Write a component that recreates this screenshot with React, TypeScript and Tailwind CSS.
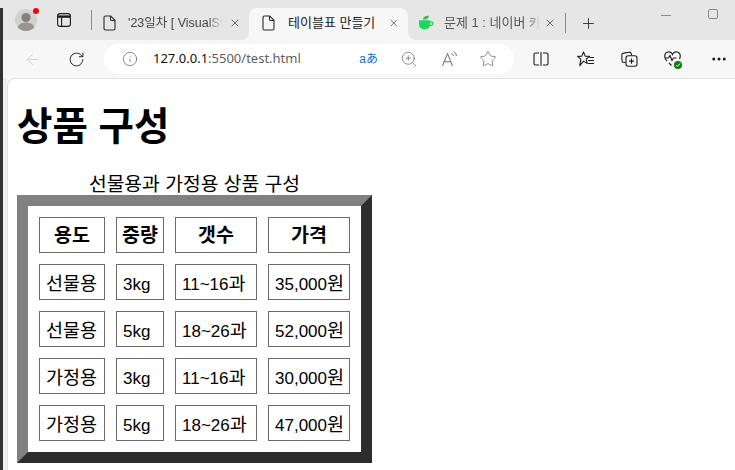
// Edge browser window showing a small HTML table test page
import { ArrowLeft, Ellipsis, Info, Plus, RotateCw, Star, X, ZoomIn } from "lucide-react";

// each cell: latin part, hangul part (hangul renders a bit larger than latin in the shot)
const rows = [
  [["", "선물용"], ["3kg", ""], ["11~16", "과"], ["35,000", "원"]],
  [["", "선물용"], ["5kg", ""], ["18~26", "과"], ["52,000", "원"]],
  [["", "가정용"], ["3kg", ""], ["11~16", "과"], ["30,000", "원"]],
  [["", "가정용"], ["5kg", ""], ["18~26", "과"], ["47,000", "원"]],
];

const headers = ["용도", "중량", "갯수", "가격"];
const cellWidths = ["w-[66px]", "w-[48px]", "w-[82px]", "w-[82px]"];

function DocIcon() {
  return (
    <svg width="14" height="16" viewBox="0 0 14 16" fill="none" stroke="#2b2b2b" strokeWidth="1.1" className="shrink-0">
      <path d="M2.5 1h5.2L12 5.3V13.5a1.5 1.5 0 0 1-1.5 1.5h-8A1.5 1.5 0 0 1 1 13.5v-11A1.5 1.5 0 0 1 2.5 1Z" />
      <path d="M7.5 1v3.2A1.3 1.3 0 0 0 8.8 5.5H12" />
    </svg>
  );
}

function Avatar() {
  return (
    <div className="relative h-[22px] w-[22px] shrink-0">
      <svg width="22" height="22" viewBox="0 0 22 22">
        <circle cx="11" cy="11" r="11" fill="#d3d1ce" />
        <circle cx="11" cy="8.5" r="4.6" fill="#86817c" />
        <path d="M2.8 18.5C4 14.6 7 13.6 11 13.6s7 1 8.2 4.9A11 11 0 0 1 11 22a11 11 0 0 1-8.2-3.5Z" fill="#9a9590" />
      </svg>
      <span className="absolute right-[-2px] top-[-1px] h-[6px] w-[6px] rounded-full bg-[#f00016]" />
    </div>
  );
}

function VerticalTabsIcon() {
  return (
    <svg width="14" height="14" viewBox="0 0 14 14" fill="none" stroke="#1c1c1c" strokeWidth="1.1" className="shrink-0">
      <rect x="0.6" y="0.6" width="12.8" height="12.8" rx="2.5" />
      <path d="M1 3.6h12" strokeWidth="2.4" />
      <path d="M4.6 4v9" />
    </svg>
  );
}

function CupIcon() {
  return (
    <svg width="16" height="16" viewBox="0 0 16 16" className="shrink-0">
      <path d="M5 4.5C5 1.8 8 .7 11 .8 10.8 3.4 8.4 5 5 4.5Z" fill="#39b54a" />
      <path d="M1 5.2h11.2v4.3a5 5 0 0 1-5 5H6a5 5 0 0 1-5-5Z" fill="#1ed760" />
      <path d="M12 6.8h1.2a1.7 1.7 0 0 1 0 3.6H12" fill="none" stroke="#1ed760" strokeWidth="1.3" />
    </svg>
  );
}

function ReadAloudIcon() {
  return (
    <svg width="18" height="18" viewBox="0 0 18 18" fill="none" stroke="#6b6b6b" strokeWidth="1">
      <path d="M1.5 16 6.5 3.5 11.5 16M3.3 11.8h6.4" />
      <path d="M10.5 3.2c1 .6 1.6 1.6 1.8 2.8M12.6 1.4c1.6 1 2.6 2.6 2.8 4.6" />
    </svg>
  );
}

function SplitIcon() {
  return (
    <svg width="16" height="14" viewBox="0 0 16 14" fill="none" stroke="#1c1c1c" strokeWidth="1.1">
      <path d="M6 1H2.5A1.5 1.5 0 0 0 1 2.5v9A1.5 1.5 0 0 0 2.5 13H6" />
      <path d="M10 1h3.5A1.5 1.5 0 0 1 15 2.5v9a1.5 1.5 0 0 1-1.5 1.5H10" />
      <path d="M8 0v14" />
    </svg>
  );
}

function FavoritesIcon() {
  return (
    <svg width="18" height="16" viewBox="0 0 18 16" fill="none" stroke="#1c1c1c" strokeWidth="1.1">
      <path d="M6.5 1 8.2 5.1l4.3.3-3.3 2.8 1 4.2-3.7-2.3-3.7 4.6 1-6.5L.6 5.4l4.2-.3Z" strokeLinejoin="round" />
      <path d="M12.5 6.5H17M11 9.5h6M11 12.5h6" />
    </svg>
  );
}

function CollectionsIcon() {
  return (
    <svg width="17" height="16" viewBox="0 0 17 16" fill="none" stroke="#1c1c1c" strokeWidth="1.1">
      <path d="M4.5 11.5H3A2 2 0 0 1 1 9.7L.8 4.2A2 2 0 0 1 2.6 2.1L8 1.2a2 2 0 0 1 2.2 1.4l.5 1.7" />
      <rect x="5" y="4.8" width="11" height="10.5" rx="2.2" />
      <path d="M10.5 7.5v5.2M8 10.1h5" />
    </svg>
  );
}

function HealthIcon() {
  return (
    <div className="relative h-[16px] w-[17px]">
      <svg width="17" height="16" viewBox="0 0 17 16" fill="none" stroke="#1c1c1c" strokeWidth="1.1">
        <path d="M3 10C1.5 8.5.8 7 .8 5.4A4 4 0 0 1 8.5 3.5 4 4 0 0 1 16.2 5.4C16.2 6.5 16 7 15.5 8" />
        <path d="M.8 7h3.7l1.5-2.5L8 9.5l1.500-2.500h3" />
        <path d="M5 12l2.500 2.500" />
      </svg>
      <span className="absolute bottom-[-2px] right-[-1px] flex h-[8px] w-[8px] items-center justify-center rounded-full bg-[#107c10]">
        <svg width="6" height="6" viewBox="0 0 6 6" fill="none" stroke="#fff" strokeWidth="1">
          <path d="M1 3l1.500 1.500L5 1.500" />
        </svg>
      </span>
    </div>
  );
}

export default function App() {
  return (
    <div className="flex h-[470px] w-[735px] overflow-hidden bg-[#f7f7f7] font-['Liberation_Sans','Noto_Sans_CJK_KR',sans-serif] text-black">
      {/* Dark window edge on the left */}
      <div className="w-[3px] shrink-0 bg-[#e6e6e6] pt-[8px]">
        <div className="h-full bg-[#333333]" />
      </div>

      <div className="flex min-w-0 flex-1 flex-col">
        {/* Tab strip */}
        <div className="flex h-[40px] shrink-0 items-end bg-[#e6e6e6] pl-[12px]">
          <div className="flex h-[32px] items-center self-end pb-[8px]">
            <Avatar />
            <div className="ml-[20px]">
              <VerticalTabsIcon />
            </div>
            <div className="ml-[20px] h-[20px] w-px bg-[#8c8c8c]" />
          </div>
          <div className="ml-[11px] w-[146px] bg-[#f7f7f7]">
            <div className="flex h-[32px] items-center rounded-br-[8px] bg-[#e6e6e6] pb-[2px] pr-[8px] text-[12.5px] text-[#444]">
              <DocIcon />
              <span className="ml-[11px] w-[94px] whitespace-nowrap [mask-image:linear-gradient(to_right,black_85%,transparent)]">
                '23일차 [ VisualSt
              </span>
              <X size={12} strokeWidth={1.4} className="ml-auto text-[#333]" />
            </div>
          </div>
          <div className="flex h-[32px] w-[159px] items-center rounded-t-[8px] bg-[#f7f7f7] pb-[2px] pl-[13px] pr-[8px] text-[13px] text-[#222]">
            <DocIcon />
            <span className="ml-[12px] w-[104px] whitespace-nowrap">테이블표 만들기</span>
            <X size={12} strokeWidth={1.4} className="ml-auto text-[#333]" />
          </div>
          <div className="w-[157px] bg-[#f7f7f7]">
            <div className="flex h-[32px] items-center rounded-bl-[8px] bg-[#e6e6e6] pb-[2px] pl-[10px] text-[13px] text-[#555]">
              <CupIcon />
              <span className="ml-[10px] w-[96px] whitespace-nowrap [mask-image:linear-gradient(to_right,black_88%,transparent)]">
                문제 1 : 네이버 카
              </span>
              <X size={12} strokeWidth={1.4} className="ml-[4px] text-[#333]" />
            </div>
          </div>
          <div className="flex h-[32px] items-center pb-[2px]">
            <div className="h-[20px] w-px bg-[#8c8c8c]" />
            <Plus size={17} strokeWidth={1.2} className="ml-[14px] text-[#222]" />
          </div>
          <div className="ml-auto flex h-[40px] items-start pr-[17px] pt-[9px]">
            <div className="mt-[6px] h-px w-[10px] bg-[#8a8a8a]" />
            <div className="ml-[37px] h-[10px] w-[10px] rounded-[2px] border border-[#8a8a8a]" />
          </div>
        </div>

        {/* Address bar row */}
        <div className="flex h-[38px] shrink-0 items-center pl-[21px]">
          <ArrowLeft size={17} strokeWidth={1} className="text-[#c4c4c4]" />
          <RotateCw size={17} strokeWidth={1.3} className="ml-[27px] text-[#1c1c1c]" />
          <div className="ml-[19px] flex h-[30px] w-[410px] items-center rounded-full bg-white pl-[18px] pr-[17px]">
            <Info size={16} strokeWidth={1} className="text-[#555]" />
            <span className="ml-[15px] font-['Noto_Sans',sans-serif] text-[13px] text-[#5f5f5f]">
              <span className="text-[#111]">127.0.0.1</span>:5500/test.html
            </span>
            <span className="ml-auto text-[12px] text-[#0a74c9]">aあ</span>
            <ZoomIn size={18} strokeWidth={1} className="ml-[22px] text-[#6b6b6b]" />
            <div className="ml-[23px]">
              <ReadAloudIcon />
            </div>
            <Star size={18} strokeWidth={1} className="ml-[20px] text-[#6b6b6b]" />
          </div>
          <div className="ml-[19px]">
            <SplitIcon />
          </div>
          <div className="ml-[28px]">
            <FavoritesIcon />
          </div>
          <div className="ml-[26px]">
            <CollectionsIcon />
          </div>
          <div className="ml-[26px]">
            <HealthIcon />
          </div>
          <Ellipsis size={18} strokeWidth={2} className="ml-[29px] text-[#1c1c1c]" />
        </div>

        {/* Page area */}
        <div className="flex min-h-0 flex-1">
          <div className="w-[4px] bg-[#eeeeee]" />
          <div className="flex-1 rounded-tl-[8px] border-l border-t border-[#e3e3e3] bg-white pl-[9px] text-black">
            <h1 className="mt-[24px] text-[38.5px] font-bold leading-[48px]">상품 구성</h1>
            <table className="mt-[16px] border-separate border-spacing-[11px] border-[11px] border-b-[#2d2d2d] border-l-[#808080] border-r-[#2d2d2d] border-t-[#808080] text-[18.5px]">
              <caption className="h-[28px] pt-[8px] text-center text-[19.3px] leading-[20px]">선물용과 가정용 상품 구성</caption>
              <thead>
                <tr>
                  {headers.map((h, i) => (
                    <th key={h} className={`${cellWidths[i]} h-[36px] border border-[#6b6b6b] p-0 pt-[1px] text-center text-[19.5px] font-bold leading-none`}>
                      {h}
                    </th>
                  ))}
                </tr>
              </thead>
              <tbody>
                {rows.map((row, r) => (
                  <tr key={r}>
                    {row.map((c, i) => (
                      <td key={i} className={`${cellWidths[i]} h-[36px] border border-[#6b6b6b] pb-0 pl-[6px] pr-[4px] pt-[4px] text-left leading-none whitespace-nowrap`}>
                        <span className="text-[17px]">{c[0]}</span>
                        {c[1]}
                      </td>
                    ))}
                  </tr>
                ))}
              </tbody>
            </table>
          </div>
        </div>
      </div>
    </div>
  );
}
